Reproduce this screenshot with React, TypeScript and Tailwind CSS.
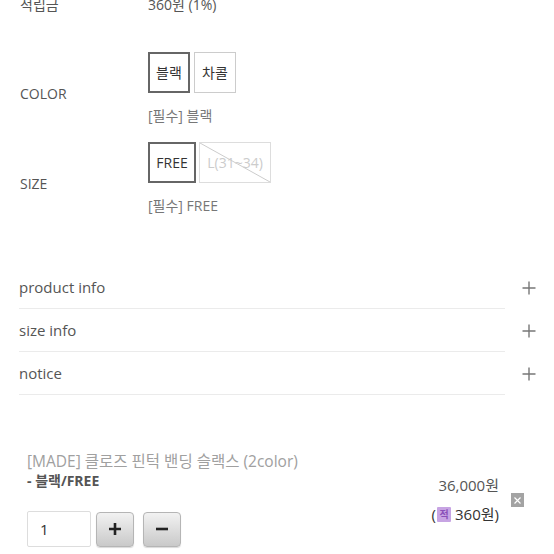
import { useState } from "react";

const font = { fontFamily: '"Open Sans", "Noto Sans CJK KR", sans-serif' };

function PlusIcon() {
  return (
    <svg width="14" height="14" viewBox="0 0 14 14" className="shrink-0">
      <path d="M7 0.5v13M0.5 7h13" stroke="#777" strokeWidth="1.4" fill="none" />
    </svg>
  );
}

export default function App() {
  const [color, setColor] = useState("블랙");
  const [qty, setQty] = useState(1);

  return (
    <div className="w-[554px] h-[554px] overflow-hidden bg-white text-[#555]" style={font}>
      {/* 적립금 */}
      <div className="flex pl-[20px] mt-[-7px] h-[22px] items-center text-[14px]">
        <div className="w-[128px]">적립금</div>
        <div>360원 (1%)</div>
      </div>

      {/* COLOR */}
      <div className="flex pl-[20px] mt-[37px] items-center text-[14px]">
        <div className="w-[128px]">COLOR</div>
        <div className="flex flex-col pb-[7px]">
          <div className="flex gap-[4px]">
            {["블랙", "차콜"].map((c) => (
              <button
                key={c}
                onClick={() => setColor(c)}
                className={
                  "w-[42px] h-[41px] flex items-center justify-center text-[14px] text-[#333] bg-white " +
                  (color === c ? "border-2 border-[#666]" : "border border-[#ccc]")
                }
              >
                {c}
              </button>
            ))}
          </div>
          <div className="mt-[12px] h-[22px] leading-[22px] text-[#777]">[필수] {color}</div>
        </div>
      </div>

      {/* SIZE */}
      <div className="flex pl-[20px] mt-[8px] items-center text-[14px]">
        <div className="w-[128px]">SIZE</div>
        <div className="flex flex-col pb-[7px]">
          <div className="flex gap-[3px]">
            <button className="w-[48px] h-[41px] flex items-center justify-center border-2 border-[#666] text-[14px] text-[#333] bg-white">
              FREE
            </button>
            <div className="relative w-[72px] h-[41px] flex items-center justify-center border border-[#ddd] text-[14px] text-[#ccc]">
              L(31~34)
              <svg className="absolute inset-0" width="70" height="39" viewBox="0 0 70 39" preserveAspectRatio="none">
                <line x1="0" y1="0" x2="70" y2="39" stroke="#ccc" strokeWidth="1" />
              </svg>
            </div>
          </div>
          <div className="mt-[12px] h-[22px] leading-[22px] text-[#777]">[필수] FREE</div>
        </div>
      </div>

      {/* accordion */}
      <div className="mt-[42px] pl-[19px] flex flex-col text-[15px]">
        {["product info", "size info", "notice"].map((t) => (
          <div key={t} className="flex items-center">
            <div className="w-[486px] h-[43px] flex items-center border-b border-[#ebebeb]">{t}</div>
            <div className="ml-[17px]">
              <PlusIcon />
            </div>
          </div>
        ))}
      </div>

      {/* selected product */}
      <div className="mt-[56px] flex pl-[27px] pr-[30px] text-[15px]">
        <div className="flex-1 flex flex-col">
          <div className="h-[20px] leading-[20px] text-[15.5px] text-[#a0a0a0] whitespace-nowrap">
            [MADE] 클로즈 핀턱 밴딩 슬랙스 (2color)
          </div>
          <div className="h-[20px] leading-[20px] font-bold text-[14px] text-[#555]">- 블랙/FREE</div>
          <div className="mt-[20px] flex items-center gap-[5px]">
            <input
              value={qty}
              onChange={(e) => setQty(Number(e.target.value) || 1)}
              className="w-[64px] h-[36px] border border-[#ddd] rounded-[2px] pl-[12px] text-[15px] text-[#333] outline-none"
            />
            <button
              onClick={() => setQty(qty + 1)}
              className="w-[38px] h-[35px] rounded-[4px] border border-[#b5b5b5] bg-gradient-to-b from-[#f2f2f2] to-[#c9c9c9] shadow-[0_1px_1px_rgba(0,0,0,0.15)] flex items-center justify-center"
            >
              <svg width="14" height="14" viewBox="0 0 14 14">
                <path d="M7 1v12M1 7h12" stroke="#222" strokeWidth="2.6" />
              </svg>
            </button>
            <button
              onClick={() => setQty(Math.max(1, qty - 1))}
              className="ml-[4px] w-[38px] h-[35px] rounded-[4px] border border-[#b5b5b5] bg-gradient-to-b from-[#f2f2f2] to-[#c9c9c9] shadow-[0_1px_1px_rgba(0,0,0,0.15)] flex items-center justify-center"
            >
              <svg width="14" height="14" viewBox="0 0 14 14">
                <path d="M1 7h12" stroke="#222" strokeWidth="2.6" />
              </svg>
            </button>
          </div>
        </div>
        <div className="mt-[24px] flex flex-col items-end">
          <div className="h-[20px] leading-[20px] text-[#555]">36,000원</div>
          <div className="mt-[9px] h-[20px] flex items-center text-[#333]">
            (
            <span className="mx-[1px] w-[14px] h-[15px] bg-[#c7a4e3] text-[#8a4fb8] text-[10px] font-bold leading-[15px] text-center rounded-[1px]">
              적
            </span>
            <span className="ml-[3px]">360원)</span>
          </div>
        </div>
        <div className="mt-[42px] ml-[12px] w-[13px] h-[14px] bg-[#a3a3a3] flex items-center justify-center">
          <svg width="7" height="7" viewBox="0 0 7 7">
            <path d="M0.5 0.5l6 6M6.5 0.5l-6 6" stroke="#fff" strokeWidth="1.2" />
          </svg>
        </div>
      </div>
    </div>
  );
}
